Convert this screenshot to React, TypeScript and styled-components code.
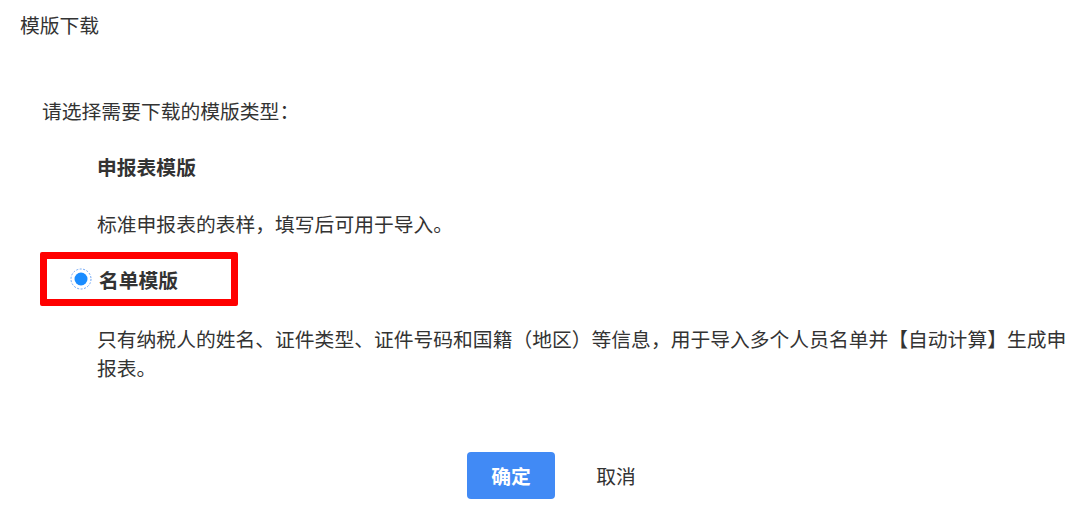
import React, { useState } from 'react';
import styled, { createGlobalStyle } from 'styled-components';

const GlobalStyle = createGlobalStyle`
  html, body {
    margin: 0;
    padding: 0;
    background: #ffffff;
  }
  body {
    font-family: "Noto Sans CJK SC", "Noto Sans", "Liberation Sans", sans-serif;
    font-size: 19.8px;
    color: #333333;
  }
`;

const Dialog = styled.div`
  width: 1080px;
  height: 511px;
  display: flex;
  flex-direction: column;
`;

const Header = styled.div`
  padding: 10px 20px 0;
  line-height: 29px;
  color: #333;
`;

const Body = styled.div`
  padding: 57px 5px 0 42px;
  line-height: 29px;
`;

const Prompt = styled.div`
  margin-bottom: 27px;
`;

const OptionList = styled.div`
  padding-left: 55px;
  display: flex;
  flex-direction: column;
`;

const OptionTitle = styled.div`
  font-weight: 700;
  color: #333;
`;

const OptionDesc = styled.div<{ $gap?: number }>`
  margin-top: ${(p) => p.$gap ?? 28}px;
`;

const Highlight = styled.div`
  margin: 14px 0 0 -57px;
  width: 161px;
  height: 40px;
  border: 7px solid #ff0000;
  border-radius: 2px;
  display: flex;
  align-items: center;
  padding-left: 23px;
`;

const RadioLabel = styled.label`
  display: flex;
  align-items: center;
  gap: 7px;
  font-weight: 700;
  white-space: nowrap;
  cursor: pointer;
`;

const RadioDot = styled.svg`
  width: 22px;
  height: 22px;
  flex: none;
`;

const Footer = styled.div`
  margin-top: 70px;
  padding-left: 47px;
  display: flex;
  justify-content: center;
  gap: 17px;
`;

const Button = styled.button<{ $primary?: boolean }>`
  width: 88px;
  height: 47px;
  border: none;
  border-radius: 4px;
  font-family: inherit;
  font-size: 19.8px;
  font-weight: ${(p) => (p.$primary ? 700 : 400)};
  color: ${(p) => (p.$primary ? '#ffffff' : '#333333')};
  background: ${(p) => (p.$primary ? '#418af5' : 'transparent')};
  cursor: pointer;
`;

export default function App() {
  const [selected, setSelected] = useState('list');

  return (
    <Dialog>
      <GlobalStyle />
      <Header>模版下载</Header>
      <Body>
        <Prompt>请选择需要下载的模版类型：</Prompt>
        <OptionList>
          <OptionTitle onClick={() => setSelected('report')}>申报表模版</OptionTitle>
          <OptionDesc>标准申报表的表样，填写后可用于导入。</OptionDesc>
          <Highlight>
            <RadioLabel onClick={() => setSelected('list')}>
              <RadioDot viewBox="0 0 22 22">
                <circle cx="11" cy="11" r="10" fill="#fff" stroke="#6ea6f5" strokeWidth="1" strokeDasharray="2 1.5" />
                {selected === 'list' && <circle cx="11" cy="11" r="6.5" fill="#1a8cff" />}
              </RadioDot>
              名单模版
            </RadioLabel>
          </Highlight>
          <OptionDesc $gap={18}>
            只有纳税人的姓名、证件类型、证件号码和国籍（地区）等信息，用于导入多个人员名单并【自动计算】生成申报表。
          </OptionDesc>
        </OptionList>
      </Body>
      <Footer>
        <Button $primary>确定</Button>
        <Button>取消</Button>
      </Footer>
    </Dialog>
  );
}
